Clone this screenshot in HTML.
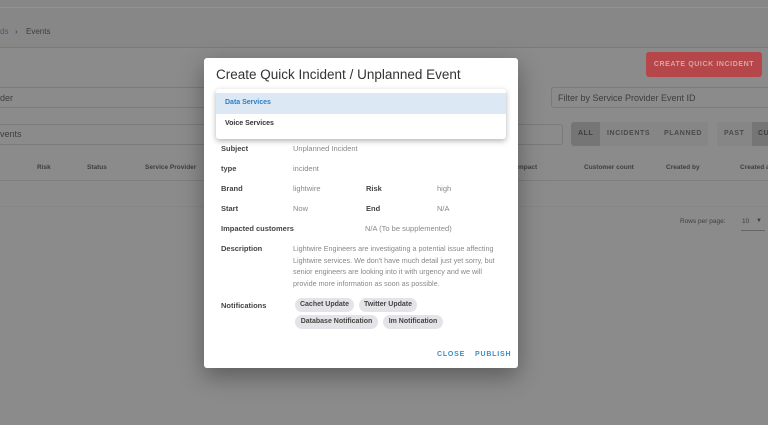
<!DOCTYPE html>
<html><head><meta charset="utf-8"><style>
*{margin:0;padding:0;box-sizing:border-box}
body{width:768px;height:425px;overflow:hidden;background:#8b8b8b;font-family:"Liberation Sans",sans-serif;position:relative}
.a{position:absolute;white-space:nowrap}
.t{font-size:8px;color:#3e3e3e;position:absolute;white-space:nowrap}
.box{position:absolute;border:1px solid #7a7a7a;border-radius:3px}
.m{position:absolute;left:204px;top:58px;width:314px;height:310px;background:#fff;border-radius:3px;box-shadow:0 8px 24px rgba(0,0,0,.35)}
.l{position:absolute;font-size:7.5px;font-weight:bold;color:#444;white-space:nowrap}
.v{position:absolute;font-size:7.5px;color:#888;white-space:nowrap}
.chip{position:absolute;height:14px;border-radius:7px;background:#e4e4e8;font-size:7px;font-weight:bold;color:#444;line-height:14px;text-align:center;white-space:nowrap}
</style></head><body>
<div class="a" style="left:0;top:0;width:768px;height:48px;background:#878787;border-bottom:1px solid #6f7c8a"></div>
<div class="a" style="left:0;top:7px;width:768px;height:1px;background:#929292"></div>
<div class="t" style="left:0;top:27px;color:#3d5d80">ds</div>
<div class="t" style="left:15px;top:27px">›</div>
<div class="t" style="left:26px;top:27px">Events</div>
<div class="a" style="left:646px;top:52px;width:116px;height:25px;background:#b5464a;border-radius:3px;color:#d9a5a7;font-size:7px;font-weight:bold;letter-spacing:.6px;text-align:center;line-height:25px">CREATE QUICK INCIDENT</div>
<div class="box" style="left:-4px;top:87px;width:480px;height:21px"></div>
<div class="t" style="left:0;top:93px;font-size:9px">der</div>
<div class="box" style="left:551px;top:87px;width:220px;height:21px"></div>
<div class="t" style="left:558px;top:93px;font-size:9px">Filter by Service Provider Event ID</div>
<div class="box" style="left:-4px;top:124px;width:567px;height:21px"></div>
<div class="t" style="left:0;top:129px;font-size:9px">vents</div>
<div class="a" style="left:571px;top:122px;width:137px;height:24px;background:#868686;border-radius:3px"></div>
<div class="a" style="left:571px;top:122px;width:29px;height:24px;background:#757575;border-radius:3px 0 0 3px"></div>
<div class="t" style="left:578px;top:130px;font-size:7px;font-weight:bold;letter-spacing:.6px">ALL</div>
<div class="t" style="left:607px;top:130px;font-size:7px;font-weight:bold;letter-spacing:.6px;color:#4a4a4a">INCIDENTS</div>
<div class="t" style="left:664px;top:130px;font-size:7px;font-weight:bold;letter-spacing:.6px;color:#4a4a4a">PLANNED</div>
<div class="a" style="left:717px;top:122px;width:60px;height:24px;background:#868686;border-radius:3px"></div>
<div class="a" style="left:752px;top:122px;width:20px;height:24px;background:#757575"></div>
<div class="t" style="left:724px;top:130px;font-size:7px;font-weight:bold;letter-spacing:.6px;color:#4a4a4a">PAST</div>
<div class="t" style="left:758px;top:130px;font-size:7px;font-weight:bold;letter-spacing:.6px">CU</div>
<div class="t" style="left:37px;top:164px;font-size:6.5px;font-weight:bold">Risk</div>
<div class="t" style="left:87px;top:164px;font-size:6.5px;font-weight:bold">Status</div>
<div class="t" style="left:145px;top:164px;font-size:6.5px;font-weight:bold">Service Provider</div>
<div class="t" style="left:518px;top:164px;font-size:6.5px;font-weight:bold">mpact</div>
<div class="t" style="left:584px;top:164px;font-size:6.5px;font-weight:bold">Customer count</div>
<div class="t" style="left:666px;top:164px;font-size:6.5px;font-weight:bold">Created by</div>
<div class="t" style="left:740px;top:164px;font-size:6.5px;font-weight:bold">Created a</div>
<div class="a" style="left:0;top:180px;width:768px;height:1px;background:#7e7e7e"></div>
<div class="a" style="left:0;top:206px;width:768px;height:1px;background:#858585"></div>
<div class="t" style="left:680px;top:218px;font-size:6.5px">Rows per page:</div>
<div class="t" style="left:742px;top:218px;font-size:6.5px">10</div>
<div class="t" style="left:756px;top:218px;font-size:6px">▼</div>
<div class="a" style="left:741px;top:230px;width:24px;height:1px;background:#666"></div>

<div class="m">
<div class="a" style="left:12px;top:9px;font-size:13.5px;color:#333">Create Quick Incident / Unplanned Event</div>
<div class="l" style="left:17px;top:86px">Subject</div><div class="v" style="left:89px;top:86px">Unplanned Incident</div>
<div class="l" style="left:17px;top:106px">type</div><div class="v" style="left:89px;top:106px">incident</div>
<div class="l" style="left:17px;top:126px">Brand</div><div class="v" style="left:89px;top:126px">lightwire</div>
<div class="l" style="left:162px;top:126px">Risk</div><div class="v" style="left:233px;top:126px">high</div>
<div class="l" style="left:17px;top:146px">Start</div><div class="v" style="left:89px;top:146px">Now</div>
<div class="l" style="left:162px;top:146px">End</div><div class="v" style="left:233px;top:146px">N/A</div>
<div class="l" style="left:17px;top:166px">Impacted customers</div><div class="v" style="left:161px;top:166px">N/A (To be supplemented)</div>
<div class="l" style="left:17px;top:186px">Description</div>
<div class="v" style="left:89px;top:185px;white-space:normal;width:212px;line-height:11.6px;font-size:7.2px">Lightwire Engineers are investigating a potential issue affecting Lightwire services. We don't have much detail just yet sorry, but senior engineers are looking into it with urgency and we will provide more information as soon as possible.</div>
<div class="l" style="left:17px;top:243px">Notifications</div>
<div class="chip" style="left:91px;top:240px;width:59px">Cachet Update</div>
<div class="chip" style="left:155px;top:240px;width:58px">Twitter Update</div>
<div class="chip" style="left:91px;top:257px;width:83px">Database Notification</div>
<div class="chip" style="left:179px;top:257px;width:60px">Im Notification</div>
<div class="a" style="left:233px;top:293px;font-size:7px;font-weight:bold;color:#3a8fc7;letter-spacing:.8px">CLOSE</div>
<div class="a" style="left:271px;top:293px;font-size:7px;font-weight:bold;color:#3a8fc7;letter-spacing:.8px">PUBLISH</div>
<div class="a" style="left:12px;top:31px;width:290px;height:50px;background:#fff;border-radius:3px;box-shadow:0 2px 6px rgba(0,0,0,.3)">
<div class="a" style="left:0;top:4px;width:290px;height:21px;background:#dce8f4"></div>
<div class="a" style="left:9px;top:10px;font-size:7px;font-weight:bold;color:#2f7dbf">Data Services</div>
<div class="a" style="left:9px;top:31px;font-size:7px;font-weight:bold;color:#333">Voice Services</div>
</div>
</div>
</body></html>
